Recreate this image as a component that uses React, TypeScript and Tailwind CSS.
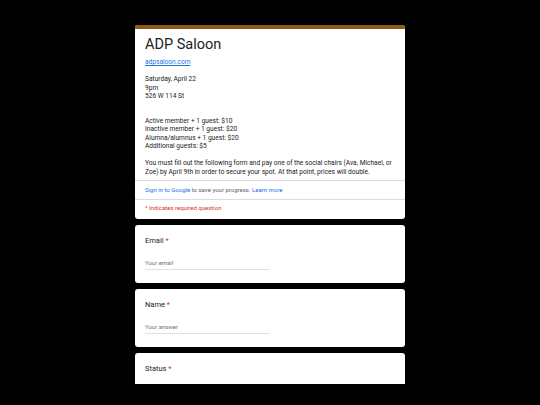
const font = { fontFamily: 'Roboto, "Liberation Sans", sans-serif' };

const Question = ({ label, placeholder }: { label: string; placeholder: string }) => (
  <div className="bg-white rounded-[3px] px-[10px] pt-[11px] pb-[13px]">
    <div className="text-[7.5px] leading-[10px] text-[#202124]">
      {label} <span className="text-[#d93025]">*</span>
    </div>
    <div className="mt-[13px] w-[125px] border-b border-[#e0e0e0] pb-[2px] text-[6px] leading-[8px] text-[#70757a]">
      {placeholder}
    </div>
  </div>
);

export default function App() {
  return (
    <div className="w-[540px] h-[405px] bg-black overflow-hidden" style={font}>
      <div className="h-[384px] overflow-hidden">
        <div className="w-[270px] mx-auto pt-[25px] flex flex-col gap-[6px]">
          <div className="bg-white rounded-[3px] overflow-hidden">
            <div className="h-[4px] bg-[#8b5a14]" />
            <div className="px-[10px] pt-[6px] pb-[4px]">
              <h1 className="text-[14.5px] leading-[20px] text-[#202124]">ADP Saloon</h1>
              <div className="mt-[3px] text-[6.6px] leading-[8.5px] text-[#202124]">
                <a className="text-[#1a73e8] underline">adpsaloon.com</a>
                <div className="mt-[8.5px]">Saturday, April 22</div>
                <div>9pm</div>
                <div>526 W 114 St</div>
                <div className="mt-[16px]">Active member + 1 guest: $10</div>
                <div>Inactive member + 1 guest: $20</div>
                <div>Alumna/alumnus + 1 guest: $20</div>
                <div>Additional guests: $5</div>
                <div className="mt-[8.5px]">
                  You must fill out the following form and pay one of the social chairs (Ava, Michael, or Zoe) by April 9th in
                  order to secure your spot. At that point, prices will double.
                </div>
              </div>
            </div>
            <div className="border-t border-[#dadce0] px-[10px] py-[5px] text-[6px] leading-[8px] text-[#5f6368]">
              <span className="text-[#1a73e8]">Sign in to Google</span> to save your progress.{' '}
              <span className="text-[#1a73e8]">Learn more</span>
            </div>
            <div className="border-t border-[#dadce0] px-[10px] pt-[4px] pb-[7px] text-[6px] leading-[8px] text-[#d93025]">
              * Indicates required question
            </div>
          </div>
          <Question label="Email" placeholder="Your email" />
          <Question label="Name" placeholder="Your answer" />
          <div className="bg-white rounded-[3px] px-[10px] pt-[11px] pb-[20px]">
            <div className="text-[7.5px] leading-[10px] text-[#202124]">
              Status <span className="text-[#d93025]">*</span>
            </div>
            <div className="mt-[10px] w-[8px] h-[8px] rounded-full border border-[#5f6368]" />
          </div>
        </div>
      </div>
    </div>
  );
}
